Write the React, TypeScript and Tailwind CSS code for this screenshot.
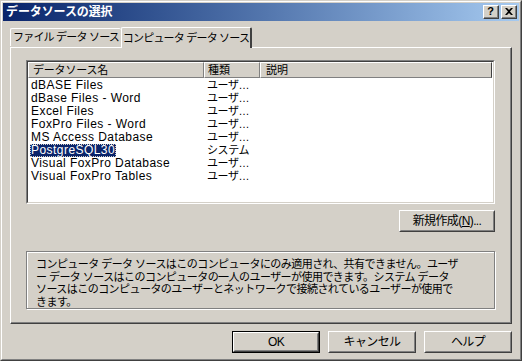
import React from 'react';

const font = "font-['Liberation_Sans','Noto_Sans_CJK_JP',sans-serif]";

const rows = [
  { name: 'dBASE Files', kind: 'ユーザ…' },
  { name: 'dBase Files - Word', kind: 'ユーザ…' },
  { name: 'Excel Files', kind: 'ユーザ…' },
  { name: 'FoxPro Files - Word', kind: 'ユーザ…' },
  { name: 'MS Access Database', kind: 'ユーザ…' },
  { name: 'PostgreSQL30', kind: 'システム', selected: true },
  { name: 'Visual FoxPro Database', kind: 'ユーザ…' },
  { name: 'Visual FoxPro Tables', kind: 'ユーザ…' },
];

// 立体ボタン (Win2000風)
function Button({ children, width, isDefault }: { children: React.ReactNode; width: string; isDefault?: boolean }) {
  return (
    <div className={`${width} h-[22px] ${isDefault ? 'border border-black' : ''}`}>
      <div className="w-full h-full border border-t-white border-l-white border-r-[#404040] border-b-[#404040]">
        <div className="w-full h-full border border-t-[#d4d0c8] border-l-[#d4d0c8] border-r-[#808080] border-b-[#808080] flex items-center justify-center text-[12px] tracking-[-0.6px] text-black whitespace-nowrap">
          {children}
        </div>
      </div>
    </div>
  );
}

function TitleButton({ children }: { children: React.ReactNode }) {
  return (
    <div className="w-[16px] h-[14px] border border-t-white border-l-white border-r-[#404040] border-b-[#404040] bg-[#d4d0c8]">
      <div className="w-full h-full border-r border-b border-[#808080] flex items-center justify-center text-[11px] font-bold leading-none text-black">
        {children}
      </div>
    </div>
  );
}

export default function App() {
  return (
    <div className={`w-[522px] h-[361px] bg-[#d4d0c8] ${font} text-[12px] leading-none text-black select-none`}>
      {/* 外枠 */}
      <div className="w-full h-full border border-t-[#d4d0c8] border-l-[#d4d0c8] border-r-[#404040] border-b-[#404040]">
        <div className="w-full h-full border border-t-white border-l-white border-r-[#808080] border-b-[#808080] p-px flex flex-col">
          {/* タイトルバー */}
          <div className="h-[18px] flex items-center justify-between pl-[3px] pr-[2px] bg-gradient-to-r from-[#0a246a] to-[#a6caf0]">
            <span className="text-white font-bold text-[12px] tracking-[-0.1px]">データソースの選択</span>
            <div className="flex gap-[2px]">
              <TitleButton>?</TitleButton>
              <TitleButton>
                <svg width="8" height="7" viewBox="0 0 8 7">
                  <path d="M0 0h2l2 2 2-2h2L5 3.5 8 7H6L4 5 2 7H0l3-3.5z" fill="black" />
                </svg>
              </TitleButton>
            </div>
          </div>

          {/* 本体 */}
          <div className="flex-1 flex flex-col px-[7px] pt-[6px]">
            {/* タブ */}
            <div className="h-[20px] flex items-end relative z-10">
              <div className="w-[111px] h-[18px] border-t border-l border-white rounded-t-[2px] flex items-center justify-center text-[11px] tracking-[-0.8px] whitespace-nowrap mb-[1px]">
                ファイル データ ソース
              </div>
              <div className="w-[131px] h-[21px] -mb-px bg-[#d4d0c8] border-t border-l border-white border-r-2 border-r-[#404040] rounded-t-[2px] flex items-center justify-center text-[11px] tracking-[-0.8px] whitespace-nowrap">
                コンピュータ データ ソース
              </div>
            </div>

            {/* タブパネル */}
            <div className="h-[277px] border border-t-white border-l-white border-r-[#404040] border-b-[#404040]">
              <div className="w-full h-full border-r border-b border-[#808080] pt-[12px] px-[15px] flex flex-col">
                {/* リストビュー */}
                <div className="h-[144px] border border-t-[#808080] border-l-[#808080] border-r-white border-b-white">
                  <div className="w-full h-full border border-t-[#404040] border-l-[#404040] border-r-[#d4d0c8] border-b-[#d4d0c8] bg-white flex flex-col">
                    <div className="flex h-[16px]">
                      <div className="w-[176px] border border-t-white border-l-white border-r-[#808080] border-b-[#808080] bg-[#d4d0c8] flex items-center pl-[4px] text-[11px] tracking-[-0.2px]">
                        データソース名
                      </div>
                      <div className="w-[56px] border border-t-white border-l-white border-r-[#808080] border-b-[#808080] bg-[#d4d0c8] flex items-center pl-[3px] text-[11px]">
                        種類
                      </div>
                      <div className="w-[232px] border border-t-white border-l-white border-r-[#404040] border-b-[#808080] bg-[#d4d0c8] flex items-center pl-[5px] text-[11px]">
                        説明
                      </div>
                    </div>
                    <div className="flex flex-col pt-px">
                      {rows.map((r) => (
                        <div key={r.name} className="flex h-[13px] items-center">
                          <div className="w-[176px] pl-[2px]">
                            <span
                              className={`px-[1px] inline-block h-[13px] leading-[12px] tracking-[0.45px] ${
                                r.selected ? 'bg-[#0a246a] text-white outline outline-1 outline-dotted outline-[#d4d0c8] -outline-offset-1' : ''
                              }`}
                            >
                              {r.name}
                            </span>
                          </div>
                          <div className="w-[56px] pl-[3px] text-[11px] tracking-[-0.4px]">{r.kind}</div>
                        </div>
                      ))}
                    </div>
                  </div>
                </div>

                {/* 新規作成 */}
                <div className="flex justify-end mt-[6px]">
                  <Button width="w-[96px]">
                    新規作成(<span className="underline">N</span>)...
                  </Button>
                </div>

                {/* 説明ボックス */}
                <div className="mt-[19px] h-[58px] border border-[#808080] shadow-[1px_1px_0_0_#ffffff,inset_1px_1px_0_0_#ffffff] pl-[9px] pt-[6px] text-[11px] tracking-[-0.55px] leading-[12.7px] whitespace-nowrap overflow-hidden">
                  <div>コンピュータ データ ソースはこのコンピュータにのみ適用され、共有できません。ユーザ</div>
                  <div>ー データ ソースはこのコンピュータの一人のユーザーが使用できます。システム データ</div>
                  <div>ソースはこのコンピュータのユーザーとネットワークで接続されているユーザーが使用で</div>
                  <div>きます。</div>
                </div>
              </div>
            </div>

            {/* 下部ボタン */}
            <div className="flex justify-end gap-[8px] mt-[7px]">
              <Button width="w-[88px]" isDefault>OK</Button>
              <Button width="w-[88px]">キャンセル</Button>
              <Button width="w-[88px]">ヘルプ</Button>
            </div>
          </div>
        </div>
      </div>
    </div>
  );
}
